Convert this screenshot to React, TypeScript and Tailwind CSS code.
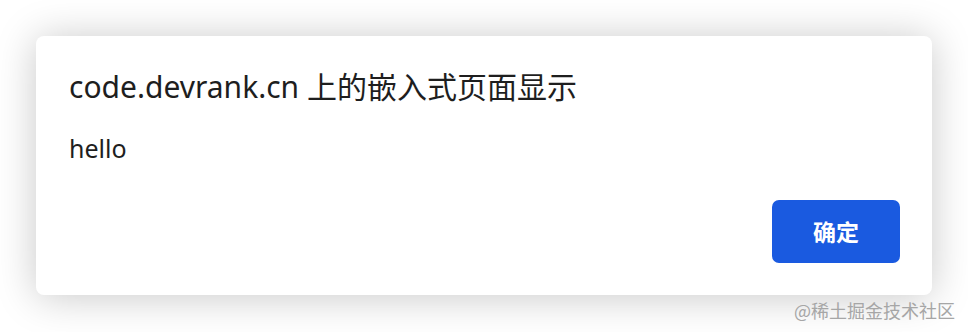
import React from "react";

export default function App() {
  return (
    <div className="relative w-[968px] h-[332px] bg-white overflow-hidden pt-[36px] pl-[36px]">
      <div className="w-[896px] h-[259px] bg-white rounded-[8px] shadow-[0_2px_40px_rgba(0,0,0,0.22)] flex flex-col pl-[33px] pr-[32px] pt-[31px] pb-[32px]">
        <div className="font-['Noto_Sans','Noto_Sans_CJK_SC',sans-serif] text-[30px] leading-[36px] text-[#1e1e1e] whitespace-nowrap">
          code.devrank.cn{" "}
          <span className="font-['Noto_Sans_CJK_SC',sans-serif]">上的嵌入式页面显示</span>
        </div>
        <div className="mt-[28px] font-['Noto_Sans',sans-serif] text-[25px] leading-[30px] text-[#1e1e1e]">
          hello
        </div>
        <div className="mt-auto flex justify-end">
          <button className="w-[128px] h-[63px] rounded-[7px] bg-[#1a5ae0] text-white text-[23px] font-bold font-['Noto_Sans_CJK_SC',sans-serif] flex items-center justify-center">
            确定
          </button>
        </div>
      </div>
      <div className="absolute right-[13px] top-[301px] font-['Noto_Sans_CJK_SC',sans-serif] text-[18px] leading-[18px] text-[#a6a6a6] whitespace-nowrap">
        @稀土掘金技术社区
      </div>
    </div>
  );
}
